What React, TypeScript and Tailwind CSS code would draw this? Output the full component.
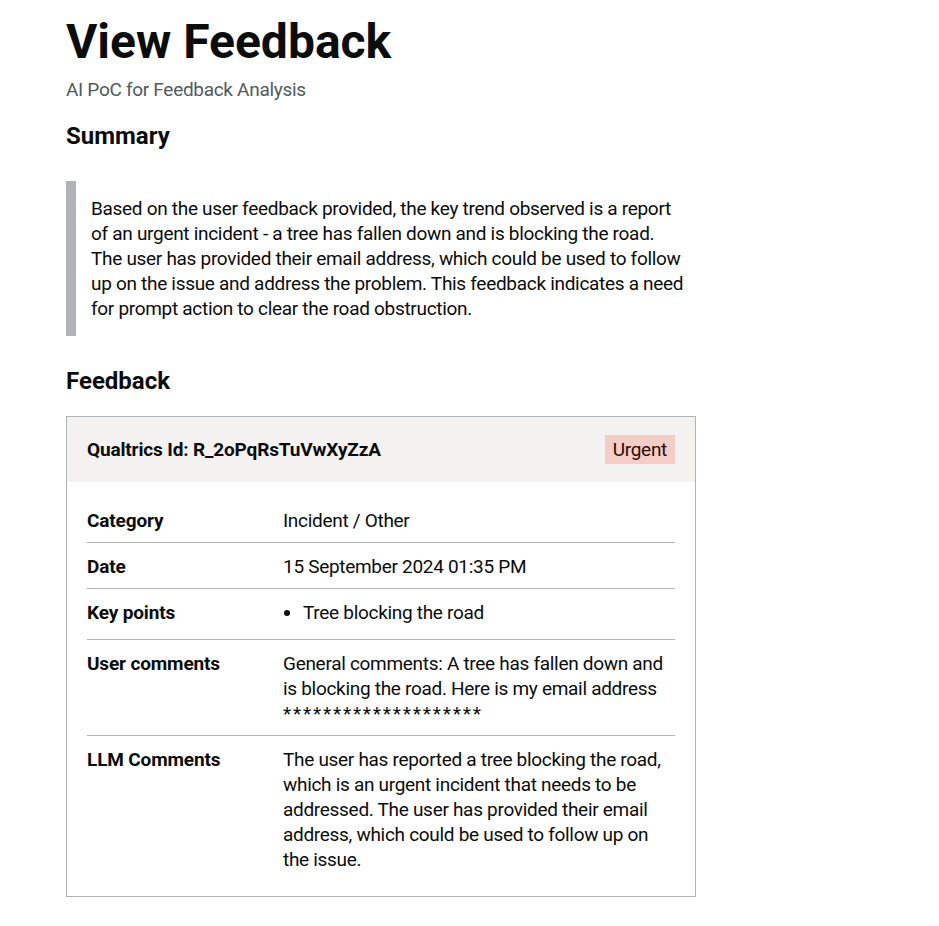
import React from "react";

/* Summary list row data */
type Row = {
  label: string;
  value: React.ReactNode;
  list?: boolean;
};

const rows: Row[] = [
  { label: "Category", value: "Incident / Other" },
  { label: "Date", value: "15 September 2024 01:35 PM" },
  { label: "Key points", value: ["Tree blocking the road"], list: true },
  {
    label: "User comments",
    value: (
      <>
        General comments: A tree has fallen down and is blocking the road. Here is my email address
        <br />
        <span className="tracking-[1.8px]">********************</span>
      </>
    ),
  },
  {
    label: "LLM Comments",
    value:
      "The user has reported a tree blocking the road, which is an urgent incident that needs to be addressed. The user has provided their email address, which could be used to follow up on the issue.",
  },
];

function SummaryRow({ row, last }: { row: Row; last: boolean }) {
  return (
    <div className={["flex", last ? "" : "border-b border-[#b1b4b6]"].join(" ")}>
      <dt className="w-[196px] shrink-0 pr-5 pt-[11px] pb-[9px] font-bold tracking-[-0.15px]">{row.label}</dt>
      <dd className="flex-1 pt-[11px] pb-[9px]">
        {row.list && Array.isArray(row.value) ? (
          <ul className="list-disc pl-5 mb-[5px]">
            {row.value.map((item) => (
              <li key={item}>{item}</li>
            ))}
          </ul>
        ) : (
          row.value
        )}
      </dd>
    </div>
  );
}

export default function App() {
  return (
    <div
      className="min-h-screen bg-white text-[#0b0c0c] text-[19px] leading-[25px] tracking-[-0.3px]"
      style={{ fontFamily: "Roboto, 'Liberation Sans', sans-serif" }}
    >
      <main className="pl-[66px] pt-[17px] pb-8">
        <h1 className="text-[48px] leading-[50px] font-bold tracking-normal">View Feedback</h1>
        <p className="mt-[10px] text-[#505a5f]">AI PoC for Feedback Analysis</p>

        <h2 className="mt-[19px] text-[24px] leading-[30px] font-bold tracking-normal">Summary</h2>
        <div className="mt-[30px] max-w-[633px] border-l-[10px] border-[#b1b4b6] p-[15px]">
          Based on the user feedback provided, the key trend observed is a report of an urgent
          incident - a tree has fallen down and is blocking the road. The user has provided their
          email address, which could be used to follow up on the issue and address the problem.
          This feedback indicates a need for prompt action to clear the road obstruction.
        </div>

        <h2 className="mt-[30px] text-[24px] leading-[30px] font-bold tracking-normal">Feedback</h2>
        <div className="mt-[20px] w-[630px] border border-[#b1b4b6]">
          <div className="flex h-[65px] items-center justify-between bg-[#f3f2f1] px-5">
            <h3 className="font-bold tracking-[-0.15px]">Qualtrics Id: R_2oPqRsTuVwXyZzA</h3>
            <span className="bg-[#f4cdc6] px-2 py-[2px] text-[#2a0b06]">Urgent</span>
          </div>
          <dl className="px-5 pt-[15px] pb-[15px]">
            {rows.map((row, i) => (
              <SummaryRow key={row.label} row={row} last={i === rows.length - 1} />
            ))}
          </dl>
        </div>
      </main>
    </div>
  );
}
